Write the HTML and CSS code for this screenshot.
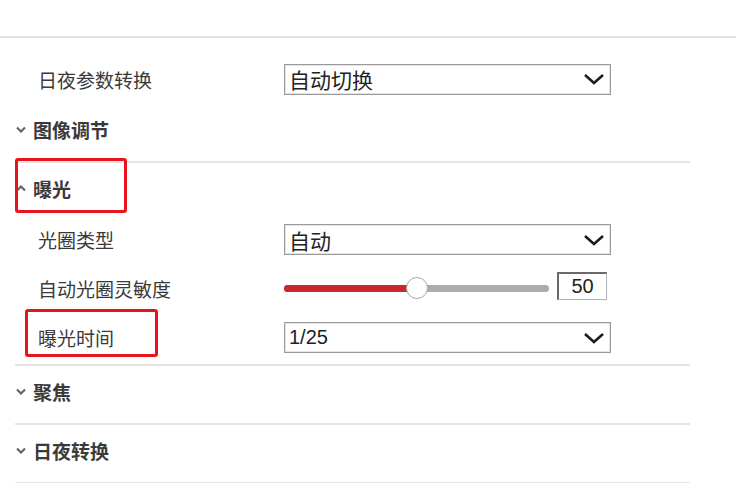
FILE: index.html
```html
<!DOCTYPE html>
<html lang="zh-CN">
<head>
    <meta charset="UTF-8">
    <title>图像参数</title>
    <link rel="stylesheet" href="styles.css">
</head>
<body>

<div class="topbar"></div>

<div class="panel">
    <div class="row first">
        <span class="label">日夜参数转换</span>
        <div class="select">
            <span>自动切换</span>
            <svg class="arrow" width="22" height="12" viewBox="0 0 22 12"><path d="M2 2 L11 10 L20 2" fill="none" stroke="#1c1c1c" stroke-width="2.6"/></svg>
        </div>
    </div>

    <div class="group">
        <div class="group-head">
            <svg class="chev" width="10" height="7" viewBox="0 0 10 7"><path d="M1 1.5 L5 5.5 L9 1.5" fill="none" stroke="#666" stroke-width="2.2"/></svg>
            <span>图像调节</span>
        </div>
    </div>

    <div class="group open">
        <div class="group-head">
            <svg class="chev" width="10" height="7" viewBox="0 0 10 7"><path d="M1 5.5 L5 1.5 L9 5.5" fill="none" stroke="#666" stroke-width="2.2"/></svg>
            <span>曝光</span>
            <div class="mark mark-head"></div>
        </div>

        <div class="row">
            <span class="label">光圈类型</span>
            <div class="select">
                <span>自动</span>
                <svg class="arrow" width="22" height="12" viewBox="0 0 22 12"><path d="M2 2 L11 10 L20 2" fill="none" stroke="#1c1c1c" stroke-width="2.6"/></svg>
            </div>
        </div>

        <div class="row">
            <span class="label">自动光圈灵敏度</span>
            <div class="slider">
                <div class="track">
                    <div class="fill" style="width: 124px;"></div>
                    <div class="knob" style="left: 122px;"></div>
                </div>
            </div>
            <div class="num">50</div>
        </div>

        <div class="row">
            <span class="label marked">曝光时间<span class="mark mark-label"></span></span>
            <div class="select">
                <span class="latin">1/25</span>
                <svg class="arrow" width="22" height="12" viewBox="0 0 22 12"><path d="M2 2 L11 10 L20 2" fill="none" stroke="#1c1c1c" stroke-width="2.6"/></svg>
            </div>
        </div>
    </div>

    <div class="group">
        <div class="group-head">
            <svg class="chev" width="10" height="7" viewBox="0 0 10 7"><path d="M1 1.5 L5 5.5 L9 1.5" fill="none" stroke="#666" stroke-width="2.2"/></svg>
            <span>聚焦</span>
        </div>
    </div>

    <div class="group">
        <div class="group-head">
            <svg class="chev" width="10" height="7" viewBox="0 0 10 7"><path d="M1 1.5 L5 5.5 L9 1.5" fill="none" stroke="#666" stroke-width="2.2"/></svg>
            <span>日夜转换</span>
        </div>
    </div>
</div>

</body>
</html>
```

FILE: styles.css
```css
body {
    margin: 0;
    background-color: #fff;
    color: #333;
    font-family: "Noto Sans CJK SC", "Liberation Sans", sans-serif;
    overflow: hidden;
}
.topbar {
    height: 36px;
    border-bottom: 2px solid #e2e2e2;
}
.panel {
    margin-left: 15px;
    width: 675px;
}
.row {
    display: flex;
    align-items: center;
    height: 49px;
    padding-left: 23px;
}
.row.first {
    height: 50px;
    margin-top: 16px;
}
.label {
    width: 246px;
    font-size: 19px;
    color: #3a3a3a;
    flex-shrink: 0;
}
.marked {
    position: relative;
}
.select {
    box-sizing: border-box;
    width: 327px;
    height: 31px;
    border: 1px solid #9a9a9a;
    box-shadow: inset 0 0 0 1px #e4e4e4;
    display: flex;
    align-items: center;
    justify-content: space-between;
    padding: 0 5px 0 4px;
    font-size: 21px;
    color: #222;
}
.select .latin {
    font-family: "Liberation Sans", sans-serif;
    font-size: 20px;
}
.arrow {
    display: block;
}
.slider {
    width: 265px;
    height: 24px;
    display: flex;
    align-items: center;
}
.track {
    position: relative;
    width: 100%;
    height: 7px;
    border-radius: 4px;
    background-color: #acacac;
}
.fill {
    height: 100%;
    border-radius: 4px 0 0 4px;
    background-color: #c9262d;
}
.knob {
    position: absolute;
    top: -8px;
    width: 20px;
    height: 20px;
    border-radius: 50%;
    background: #fff;
    border: 1.5px solid #a8a8a8;
}
.num {
    box-sizing: border-box;
    margin-left: 8px;
    margin-top: -6px;
    width: 50px;
    height: 28px;
    border: 1px solid #b4b4b4;
    border-top: 2px solid #6a6a6a;
    border-left: 2px solid #6a6a6a;
    font-family: "Liberation Sans", sans-serif;
    font-size: 20px;
    line-height: 24px;
    text-align: center;
    color: #222;
}
.group {
    border-bottom: 2px solid #e4e4e4;
    padding-bottom: 7px;
}
.group.open {
    padding-bottom: 2px;
}
.group-head + .row {
    margin-top: 2px;
}
.group-head {
    position: relative;
    height: 50px;
    display: flex;
    align-items: center;
    font-size: 19px;
    font-weight: bold;
    color: #3a3a3a;
}
.chev {
    display: block;
    margin: 0 7px 0 1px;
}
.mark {
    position: absolute;
    border: 3px solid #e8141c;
    border-radius: 3px;
    box-sizing: border-box;
}
.mark-head {
    left: 0;
    top: -5px;
    width: 112px;
    height: 55px;
}
.mark-label {
    left: -13px;
    top: -15px;
    width: 133px;
    height: 48px;
}
```
